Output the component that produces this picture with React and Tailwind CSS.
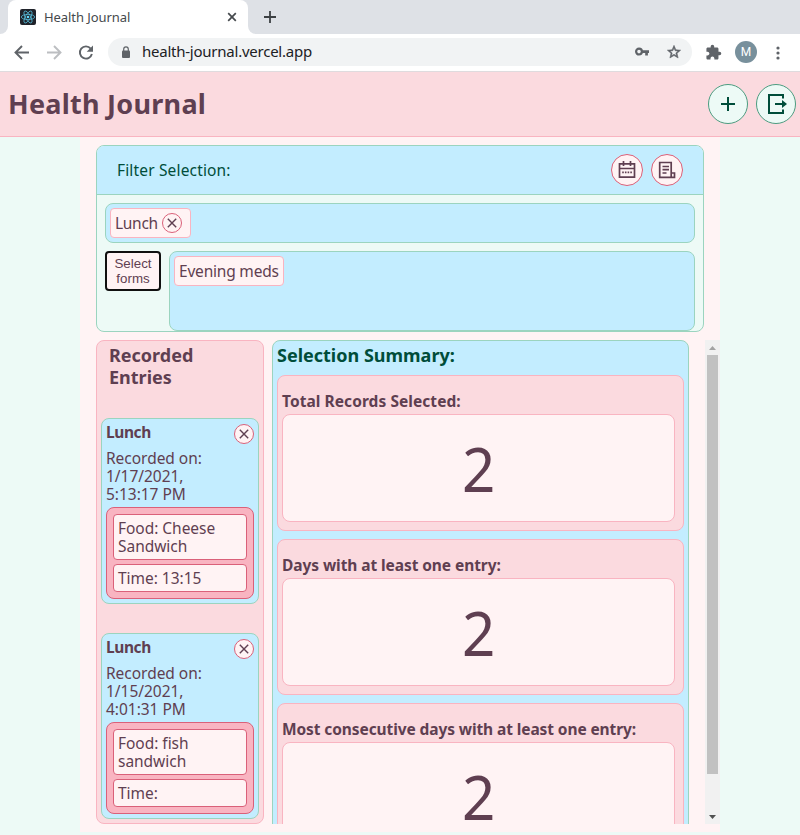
import React from "react";

const entries = [
  { date: "1/17/2021,", time: "5:13:17 PM", food: ["Food: Cheese", "Sandwich"], at: "Time: 13:15" },
  { date: "1/15/2021,", time: "4:01:31 PM", food: ["Food: fish", "sandwich"], at: "Time:" },
];

const stats = [
  { title: "Total Records Selected:", tracking: "tracking-[0.06px]" },
  { title: "Days with at least one entry:", tracking: "tracking-[-0.08px]" },
  { title: "Most consecutive days with at least one entry:", tracking: "tracking-[-0.1px]" },
];

function CloseButton() {
  return (
    <span className="flex h-5 w-5 shrink-0 items-center justify-center rounded-full border border-[#da6079] bg-[#fff3f4]">
      <svg width="18" height="18" viewBox="0 0 18 18" stroke="#5f3f51" strokeWidth="1.4" fill="none">
        <path d="M4.8 4.8l8.4 8.4M13.2 4.8l-8.4 8.4" />
      </svg>
    </span>
  );
}

function Browser() {
  return (
    <div className="font-['Noto_Sans',sans-serif]">
      <div className="flex h-[34px] bg-[#dee1e6]">
        <div className="flex h-full w-2 bg-white">
          <div className="h-full w-full rounded-br-lg bg-[#dee1e6]" />
        </div>
        <div className="flex h-full w-60 items-center rounded-t-lg bg-white pl-3 pr-[11px]">
          <svg width="16" height="16" viewBox="0 0 16 16">
            <rect width="16" height="16" rx="2" fill="#20232a" />
            <g fill="none" stroke="#55b9d6" strokeWidth=".8">
              <ellipse cx="8" cy="8" rx="6.7" ry="2.6" />
              <ellipse cx="8" cy="8" rx="6.7" ry="2.6" transform="rotate(60 8 8)" />
              <ellipse cx="8" cy="8" rx="6.7" ry="2.6" transform="rotate(120 8 8)" />
            </g>
            <circle cx="8" cy="8" r="1.3" fill="#61dafb" />
          </svg>
          <span className="ml-2 text-[13px] leading-4 tracking-[-0.07px] text-[#45494d]">Health Journal</span>
          <svg className="ml-auto" width="10" height="10" viewBox="0 0 10 10" stroke="#45494d" strokeWidth="1.7">
            <path d="M1.2 1.2l7.6 7.6M8.8 1.2L1.2 8.8" />
          </svg>
        </div>
        <div className="h-full w-2 bg-white">
          <div className="h-full w-full rounded-bl-lg bg-[#dee1e6]" />
        </div>
        <svg className="ml-2 mt-[11px]" width="12" height="12" viewBox="0 0 12 12" stroke="#3c4043" strokeWidth="1.8">
          <path d="M6 0v12M0 6h12" />
        </svg>
      </div>
      <div className="flex h-[37px] items-center bg-white pl-3.5">
        <svg width="16" height="16" viewBox="0 0 16 16" fill="none" stroke="#5f6368" strokeWidth="1.9">
          <path d="M15 7.5H2.5M8 1L1.5 7.5 8 14" />
        </svg>
        <svg className="ml-4" width="16" height="16" viewBox="0 0 16 16" fill="none" stroke="#bcbec1" strokeWidth="1.9">
          <path d="M1 7.5h12.5M8 1L14.5 7.5 8 14" />
        </svg>
        <svg className="ml-4" width="16" height="16" viewBox="0 0 16 16">
          <path d="M12.7 3.6A6.1 6.1 0 1 0 13.9 9" fill="none" stroke="#5f6368" strokeWidth="1.9" />
          <path d="M15 .5v6.3H8.7z" fill="#5f6368" />
        </svg>
        <div className="-mt-px ml-[14px] flex h-7 w-[584px] items-center rounded-full bg-[#f1f3f4] pl-[13px] pr-2.5">
          <svg width="10" height="13" viewBox="0 0 10 13">
            <rect x="1" y="4.5" width="8" height="7.5" rx="1" fill="#5f6368" />
            <path d="M2.7 5V3.2a2.3 2.3 0 0 1 4.6 0V5" fill="none" stroke="#5f6368" strokeWidth="1.2" />
          </svg>
          <span className="-mt-0.5 ml-[11px] text-[15px] leading-5 tracking-[-0.24px] text-[#202124]">health-journal.vercel.app</span>
          <svg className="ml-auto" width="14" height="10" viewBox="0 0 14 10">
            <circle cx="4" cy="4.6" r="2.9" fill="none" stroke="#5f6368" strokeWidth="2.2" />
            <path d="M7 3.3h7v2.8h-1.1v2.3h-2.7V6.1H7z" fill="#5f6368" />
          </svg>
          <svg className="ml-[17px]" width="16" height="16" viewBox="0 0 24 24">
            <path d="M22 9.24l-7.19-.62L12 2 9.19 8.63 2 9.24l5.46 4.73L5.82 21 12 17.27 18.18 21l-1.63-7.03L22 9.24zM12 15.4l-3.76 2.27 1-4.28-3.32-2.88 4.38-.38L12 6.1l1.71 4.04 4.38.38-3.32 2.88 1 4.28L12 15.4z" fill="#5f6368" stroke="#5f6368" strokeWidth=".8" />
          </svg>
        </div>
        <svg className="-mt-px ml-[13px]" width="17" height="17" viewBox="0 0 24 24" fill="#5f6368">
          <path d="M20.5 11H19V7c0-1.1-.9-2-2-2h-4V3.5a2.5 2.5 0 0 0-5 0V5H4c-1.1 0-1.99.9-1.99 2v3.8H3.5c1.49 0 2.7 1.21 2.7 2.7s-1.21 2.7-2.7 2.7H2V20c0 1.1.9 2 2 2h3.8v-1.5c0-1.49 1.21-2.7 2.7-2.7 1.49 0 2.7 1.21 2.7 2.7V22H17c1.1 0 2-.9 2-2v-4h1.5a2.5 2.5 0 0 0 0-5z" />
        </svg>
        <div className="-mt-px ml-[13px] flex h-[22px] w-[22px] items-center justify-center rounded-full bg-[#78909c] font-[Roboto,sans-serif] text-[12px] text-white">M</div>
        <svg className="ml-[19px]" width="4" height="14" viewBox="0 0 4 14" fill="#5f6368">
          <circle cx="2" cy="2" r="1.6" />
          <circle cx="2" cy="7" r="1.6" />
          <circle cx="2" cy="12" r="1.6" />
        </svg>
      </div>
    </div>
  );
}

function Header() {
  return (
    <header className="flex h-[66px] items-center gap-2 border-b border-b-[#f9b4c1] border-t border-t-[#dfdbde] bg-[#fbdadf] pl-2 pr-1">
      <h1 className="mr-auto whitespace-nowrap text-[27px] font-bold leading-8 tracking-[0.26px]">Health Journal</h1>
      <span className="flex h-10 w-10 items-center justify-center rounded-full border border-[#4c9c80] bg-[#edfaf6]">
        <svg width="14" height="14" viewBox="0 0 14 14" stroke="#004d3a" strokeWidth="2">
          <path d="M7 0v14M0 7h14" />
        </svg>
      </span>
      <span className="flex h-10 w-10 items-center justify-center rounded-full border border-[#4c9c80] bg-[#edfaf6]">
        <svg width="22" height="20" viewBox="0 0 22 20" fill="none" stroke="#004d3a" strokeWidth="2">
          <path d="M18 4.5V1H4v18h14v-3.5M10 10h8" />
          <path d="M17 6l5 4-5 4z" fill="#004d3a" stroke="none" />
        </svg>
      </span>
    </header>
  );
}

function FilterPanel() {
  return (
    <section className="h-[187px] w-[608px] overflow-hidden rounded-lg border border-[#9bd4bf] bg-[#edfaf6]">
      <div className="flex h-[49px] items-center gap-2 border-b border-[#9bd4bf] bg-[#c3edff] pl-5 pr-5">
        <span className="mr-auto whitespace-nowrap text-[15.5px] leading-5 tracking-[0.16px] text-[#004d3a]">Filter Selection:</span>
        <span className="flex h-8 w-8 items-center justify-center rounded-full border border-[#da6079] bg-[#fff3f4]">
          <svg width="18" height="18" viewBox="0 0 18 18" fill="none" stroke="#5f3f51" strokeWidth="1.7">
            <path d="M1.5 2.8h15v13.4h-15zM1.5 7.5h15M5.5 0v5M12.5 0v5" />
            <path d="M4.2 11.3h1.6M6.9 11.3h1.6M9.6 11.3h1.6M12.3 11.3h1.6" />
          </svg>
        </span>
        <span className="flex h-8 w-8 items-center justify-center rounded-full border border-[#da6079] bg-[#fff3f4]">
          <svg width="18" height="18" viewBox="0 0 18 18" fill="none" stroke="#5f3f51" strokeWidth="1.7">
            <path d="M13.2 11.5V1.5H1.7v14.8h13M13.2 11.5V16M13.2 12h3.3v4.3h-2.5" />
            <path d="M4.5 5.5h6.5M4.5 8.7h6.5M4.5 12h4" />
          </svg>
        </span>
      </div>
      <div className="px-2 pt-2">
        <div className="h-10 rounded-lg border border-[#9bd4bf] bg-[#c3edff] p-1">
          <div className="flex h-[30px] w-[81px] items-center gap-[2px] rounded border border-[#f9b4c1] bg-[#fff3f4] pl-1">
            <span className="w-[45px] whitespace-nowrap text-[15.5px] leading-5 tracking-[-0.3px]">Lunch</span>
            <CloseButton />
          </div>
        </div>
        <div className="mt-2 flex items-start gap-2">
          <button className="h-10 w-14 rounded border-2 border-[#101010] bg-[#fff3f4] font-['Liberation_Sans',Arial,sans-serif] text-[13.33px] leading-[15px]">
            Select<br />forms
          </button>
          <div className="h-20 flex-1 rounded-lg border border-[#9bd4bf] bg-[#c3edff] p-1">
            <div className="flex h-[30px] w-[110px] items-center whitespace-nowrap rounded border border-[#f9b4c1] bg-[#fff3f4] pl-1 text-[15.5px] leading-5 tracking-[-0.2px]">Evening meds</div>
          </div>
        </div>
      </div>
    </section>
  );
}

function Entry({ entry }) {
  return (
    <article className="h-[186px] rounded-lg border border-[#9bd4bf] bg-[#c3edff] px-1 pt-1 text-[15.5px] leading-[18px] tracking-[-0.03px]">
      <div className="flex h-[26px] justify-between">
        <h3 className="text-[15.5px] font-bold leading-[18px] tracking-[-0.4px]">Lunch</h3>
        <div className="pt-px">
          <CloseButton />
        </div>
      </div>
      <p className="whitespace-nowrap">Recorded on:<br />{entry.date}<br />{entry.time}</p>
      <div className="mt-1 h-[92px] rounded-lg border border-[#da6079] bg-[#f9b4c1] p-1.5">
        <div className="h-[46px] whitespace-nowrap rounded border border-[#da6079] bg-[#fff3f4] px-1 pt-1">
          {entry.food[0]}<br />{entry.food[1]}
        </div>
        <div className="mt-1 h-7 rounded border border-[#da6079] bg-[#fff3f4] px-1 pt-1">{entry.at}</div>
      </div>
    </article>
  );
}

function Stat({ title, tracking }) {
  return (
    <div className="mb-2 h-[156px] rounded-lg border border-[#f9b4c1] bg-[#fbdadf] pl-1 pr-2 pt-4">
      <h3 className={`h-[22px] whitespace-nowrap text-[15.5px] font-bold leading-[18px] ${tracking}`}>{title}</h3>
      <div className="flex h-[108px] items-center justify-center rounded-lg border border-[#f9b4c1] bg-[#fff3f4] text-[62px] leading-[72px]">
        <span className="scale-x-[0.94]">2</span>
      </div>
    </div>
  );
}

function Scrollbar() {
  return (
    <div className="ml-4 flex h-[484px] w-[15px] flex-col items-center bg-[#f1f1f1]">
      <div className="flex h-[15px] items-center">
        <svg width="7" height="4" viewBox="0 0 7 4" fill="#a3a3a3"><path d="M3.5 0L7 4H0z" /></svg>
      </div>
      <div className="h-[419px] w-[11px] bg-[#c1c1c1]" />
      <div className="mt-auto flex h-[15px] items-center">
        <svg width="7" height="4" viewBox="0 0 7 4" fill="#505050"><path d="M3.5 4L7 0H0z" /></svg>
      </div>
    </div>
  );
}

export default function App() {
  return (
    <div className="h-[835px] w-[800px] overflow-hidden bg-[#edfaf6] font-['Noto_Sans',sans-serif] text-[#5f3f51]">
      <Browser />
      <Header />
      <main className="mx-auto h-[695px] w-[640px] bg-[#fff3f4] pl-4 pt-2">
        <FilterPanel />
        <div className="mt-2 flex h-[484px] items-start overflow-hidden">
          <aside className="mr-2 h-[484px] w-[168px] rounded-lg border border-[#f9b4c1] bg-[#fbdadf] px-1 pt-[3px]">
            <h2 className="h-[74px] pl-2 text-[18px] font-bold leading-[22px]">Recorded<br />Entries</h2>
            <div className="flex flex-col gap-[29px]">
              {entries.map((entry) => <Entry key={entry.date} entry={entry} />)}
            </div>
          </aside>
          <section className="h-[522px] w-[417px] rounded-t-lg border border-[#9bd4bf] bg-[#c3edff] px-1 pt-[3px]">
            <h2 className="h-[31px] whitespace-nowrap text-[18px] font-bold leading-[22px] text-[#004d3a]">Selection Summary:</h2>
            {stats.map((stat) => <Stat key={stat.title} title={stat.title} tracking={stat.tracking} />)}
          </section>
          <Scrollbar />
        </div>
      </main>
    </div>
  );
}
